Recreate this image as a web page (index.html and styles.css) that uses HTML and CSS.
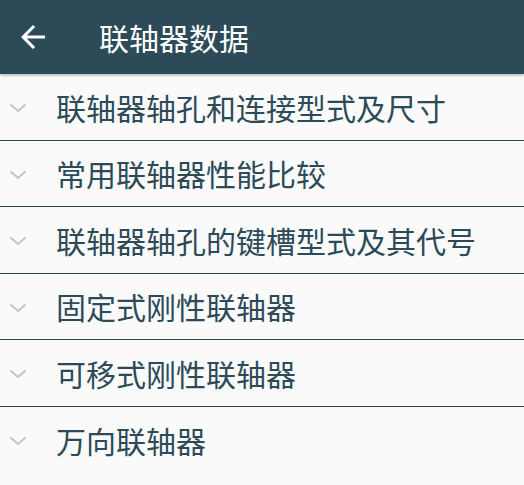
FILE: index.html
```html
<!DOCTYPE html>
<html lang="zh">
<head>
<meta charset="utf-8">
<link rel="stylesheet" href="styles.css">
</head>
<body>
<header class="bar">
  <span class="back">
    <svg viewBox="0 0 24 24" width="36" height="36"><path d="M20 11H7.83l5.59-5.59L12 4l-8 8 8 8 1.41-1.41L7.83 13H20v-2z" fill="#fff"/></svg>
  </span>
  <h1 class="title">联轴器数据</h1>
</header>
<ul class="list">
  <li class="row"><span class="chev"><svg viewBox="0 0 18 10" width="18" height="10"><polyline points="1.5,1.5 9,8 16.5,1.5" fill="none" stroke="#c4c4c4" stroke-width="2"/></svg></span><span class="label">联轴器轴孔和连接型式及尺寸</span></li>
  <li class="row"><span class="chev"><svg viewBox="0 0 18 10" width="18" height="10"><polyline points="1.5,1.5 9,8 16.5,1.5" fill="none" stroke="#c4c4c4" stroke-width="2"/></svg></span><span class="label">常用联轴器性能比较</span></li>
  <li class="row"><span class="chev"><svg viewBox="0 0 18 10" width="18" height="10"><polyline points="1.5,1.5 9,8 16.5,1.5" fill="none" stroke="#c4c4c4" stroke-width="2"/></svg></span><span class="label">联轴器轴孔的键槽型式及其代号</span></li>
  <li class="row"><span class="chev"><svg viewBox="0 0 18 10" width="18" height="10"><polyline points="1.5,1.5 9,8 16.5,1.5" fill="none" stroke="#c4c4c4" stroke-width="2"/></svg></span><span class="label">固定式刚性联轴器</span></li>
  <li class="row"><span class="chev"><svg viewBox="0 0 18 10" width="18" height="10"><polyline points="1.5,1.5 9,8 16.5,1.5" fill="none" stroke="#c4c4c4" stroke-width="2"/></svg></span><span class="label">可移式刚性联轴器</span></li>
  <li class="row last"><span class="chev"><svg viewBox="0 0 18 10" width="18" height="10"><polyline points="1.5,1.5 9,8 16.5,1.5" fill="none" stroke="#c4c4c4" stroke-width="2"/></svg></span><span class="label">万向联轴器</span></li>
</ul>
</body>
</html>
```
FILE: styles.css
```css
html, body {
  margin: 0;
  padding: 0;
  background: #fafafa;
  font-family: "Noto Sans CJK SC", "Noto Sans", sans-serif;
}
.bar {
  height: 74px;
  background: #2c4a58;
  display: flex;
  align-items: center;
  box-shadow: 0 1px 3px rgba(0,0,0,0.35);
  position: relative;
  z-index: 1;
}
.back {
  display: flex;
  width: 36px;
  height: 36px;
  margin-left: 15px;
}
.title {
  margin: 0 0 0 48px;
  color: #fff;
  font-size: 30px;
  font-weight: 400;
  line-height: 1;
}
.list {
  list-style: none;
  margin: 0;
  padding: 0;
}
.row {
  box-sizing: border-box;
  height: 66.5px;
  border-bottom: 1px solid #2c4a58;
  display: flex;
  align-items: center;
}
.row.last {
  border-bottom: none;
}
.chev {
  display: flex;
  width: 18px;
  margin-left: 9px;
  margin-top: 3px;
}
.label {
  margin-left: 29px;
  color: #2c4a58;
  font-size: 30px;
  line-height: 1;
}
```
